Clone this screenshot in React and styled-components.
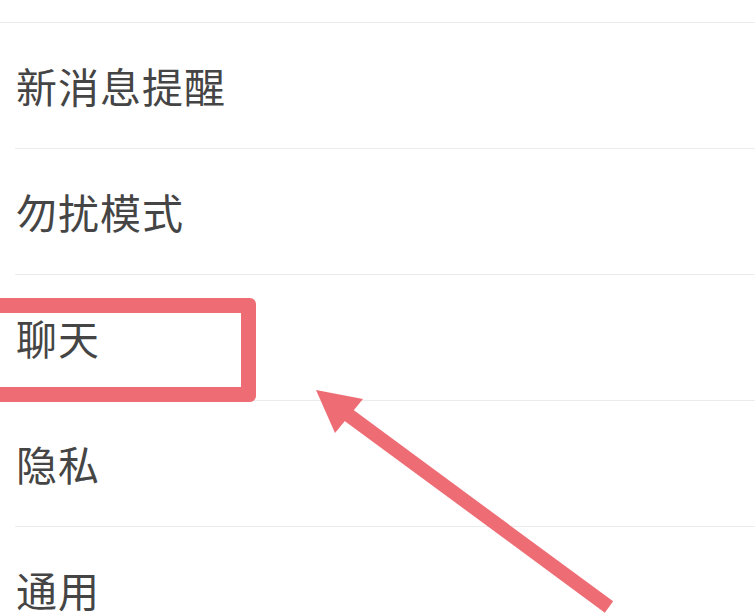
import React from "react";
import styled, { createGlobalStyle } from "styled-components";

const Global = createGlobalStyle`
  html, body { margin: 0; padding: 0; background: #ffffff; }
  body { width: 755px; height: 614px; overflow: hidden; }
`;

const Page = styled.div`
  position: relative;
  width: 755px;
  height: 614px;
  overflow: hidden;
  background: #ffffff;
  font-family: "Noto Sans CJK SC", "Noto Sans", sans-serif;
`;

const TopGap = styled.div`
  height: 22px;
  border-bottom: 1px solid #ececec;
`;

const List = styled.div`
  display: flex;
  flex-direction: column;
  padding-left: 15px;
`;

const Row = styled.div`
  display: flex;
  align-items: center;
  height: 125px;
  border-bottom: 1px solid #ececec;
  padding-left: 1px;
  font-size: 41px;
  line-height: 1;
  color: #454545;
  letter-spacing: 1px;
`;

const HighlightBox = styled.div`
  position: absolute;
  left: -20px;
  top: 298px;
  width: 276px;
  height: 104px;
  box-sizing: border-box;
  border: 15px solid #ee6d75;
  border-radius: 6px;
`;

const ArrowLayer = styled.svg`
  position: absolute;
  left: 0;
  top: 0;
  pointer-events: none;
`;

const items = ["新消息提醒", "勿扰模式", "聊天", "隐私", "通用"];

export default function App() {
  return (
    <Page>
      <Global />
      <TopGap />
      <List>
        {items.map((t) => (
          <Row key={t}>{t}</Row>
        ))}
      </List>
      <HighlightBox />
      <ArrowLayer width="755" height="614" viewBox="0 0 755 614">
        <line
          x1="343"
          y1="411"
          x2="609"
          y2="607"
          stroke="#ee6d75"
          strokeWidth="14"
        />
        <polygon points="316,390 363,399 335,433" fill="#ee6d75" />
      </ArrowLayer>
    </Page>
  );
}
